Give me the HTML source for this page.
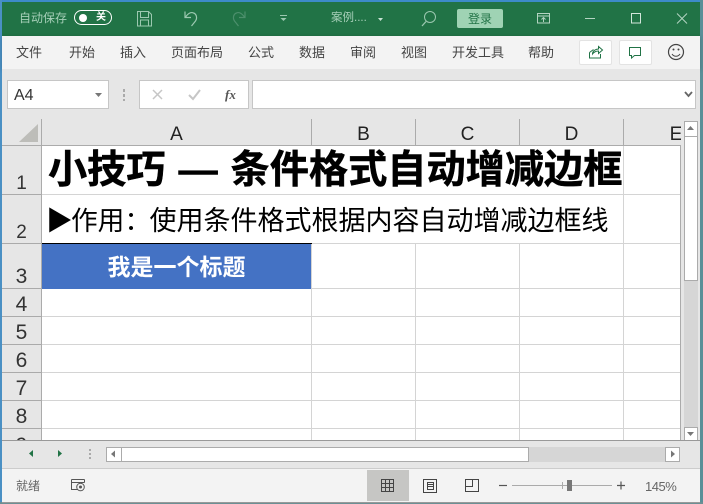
<!DOCTYPE html>
<html><head><meta charset="utf-8">
<style>
html,body{margin:0;padding:0}
body{width:703px;height:504px;position:relative;overflow:hidden;background:#6a9aa0;font-family:"Liberation Sans","Noto Sans CJK SC",sans-serif;color:#444}
div{position:absolute}
.t{white-space:nowrap;line-height:1}
.m{top:46px;font-size:13px;color:#444}
.h{background:#d4d4d4;height:1px;left:42px;width:638px}
.v{background:#d4d4d4;width:1px;top:244px;height:196px}
.r{left:2px;width:39px;text-align:center;font-size:21px;color:#333;font-family:"Liberation Sans",sans-serif;line-height:1;font-weight:normal}
.c{top:125px;font-size:19px;color:#222;text-align:center;line-height:1;font-family:"Liberation Sans",sans-serif}
.rl{left:2px;width:39px;height:1px;background:#aaa}
.cl{top:119px;width:1px;height:26px;background:#ababab}
svg{position:absolute;overflow:visible}
</style></head>
<body>
<div style="left:0;top:0;width:703px;height:2px;background:#3d8bc9"></div>
<div style="left:0;top:0;width:2px;height:504px;background:#4a90c4"></div>
<div style="left:700px;top:0;width:3px;height:504px;background:#5a8f98"></div>
<div style="left:2px;top:2px;width:698px;height:34px;background:#217346"></div>
<div class="t" style="left:19px;top:12px;font-size:12px;color:#a6cfb8">自动保存</div>
<div style="left:74px;top:10px;width:36px;height:13px;border:1.5px solid #fff;border-radius:8px"></div>
<div style="left:79px;top:14px;width:8px;height:8px;background:#fff;border-radius:50%"></div>
<div class="t" style="left:96px;top:13px;font-size:10px;color:#fff;font-weight:bold">关</div>
<svg style="left:0;top:0" width="703" height="36" fill="none" stroke-width="1">
<path d="M137.500 11.500h11l3 3v11.500h-14zM140.500 11.500v6h8v-6M140.500 26v-6h8v6" stroke="#9cc8b0"/>
<path d="M185 11.500v6h6M185.500 17c3-4 6-5 8-4 3 1 4 5 2 8l-4 5" stroke="#9cc8b0" stroke-width="1.200"/>
<path d="M245 11.500v6h-6M244.500 17c-3-4-6-5-8-4-3 1-4 5-2 8l4 5" stroke="#4c8f6c" stroke-width="1.200"/>
<path d="M280 15.500h7" stroke="#9cc8b0"/><path d="M280.500 18l3 3 3-3z" fill="#9cc8b0"/>
<path d="M378 18h5l-2.500 3z" fill="#c9e2d4"/>
<circle cx="430" cy="17" r="5.500" stroke="#9cc8b0" stroke-width="1"/><path d="M426 21.500l-4 4.500" stroke="#9cc8b0" stroke-width="1.300"/>
<path d="M537.500 13.500h12v9.500h-12zM537.500 16h12M543.500 22v-4M541.500 19.500l2-2 2 2" stroke="#b4d4c2"/>
<path d="M585 18.500h10" stroke="#b4d4c2"/>
<path d="M631.500 13.500h9v9.500h-9z" stroke="#d2e6da"/>
<path d="M677 13.500l10 10M687 13.500l-10 10" stroke="#b4d4c2"/>
</svg>
<div class="t" style="left:457px;top:9px;width:46px;height:19px;background:#9fd3b4;border-radius:2px"></div>
<div class="t" style="left:468px;top:13px;font-size:12px;color:#217346">登录</div>
<div class="t" style="left:331px;top:13px;font-size:11.500px;color:#a6cfb8">案例....</div>

<div style="left:2px;top:36px;width:698px;height:33px;background:#f3f3f3;box-shadow:0 1px 4px rgba(0,0,0,.2)"></div>
<div class="t m" style="left:16px">文件</div>
<div class="t m" style="left:69px">开始</div>
<div class="t m" style="left:120px">插入</div>
<div class="t m" style="left:171px">页面布局</div>
<div class="t m" style="left:248px">公式</div>
<div class="t m" style="left:299px">数据</div>
<div class="t m" style="left:350px">审阅</div>
<div class="t m" style="left:401px">视图</div>
<div class="t m" style="left:452px">开发工具</div>
<div class="t m" style="left:528px">帮助</div>
<div style="left:579px;top:40px;width:31px;height:23px;background:#fff;border:1px solid #e3e3e3;border-radius:2px"></div>
<div style="left:619px;top:40px;width:31px;height:23px;background:#fff;border:1px solid #e3e3e3;border-radius:2px"></div>
<svg style="left:0;top:36px" width="703" height="33" fill="none">
<path d="M589.500 16.500v5.500h11v-4M589.500 16.500l4-3M592.500 18c0-3 3-5 6-5v-2.500l4 3.500-4 3.500v-2.500c-3 0-4.500 1-6 3z" stroke="#217346"/>
<path d="M629.500 11.500h11v8h-6l-3 2.500v-2.500h-2z" stroke="#217346"/>
<circle cx="676" cy="16" r="7.500" stroke="#444" stroke-width="1.200"/><circle cx="673.500" cy="13.500" r="1" fill="#444"/><circle cx="678.500" cy="13.500" r="1" fill="#444"/><path d="M672 18c2 3 6 3 8 0" stroke="#444"/>
</svg>

<div style="left:2px;top:69px;width:698px;height:50px;background:#e6e6e6"></div>
<div style="left:7px;top:80px;width:100px;height:27px;background:#fff;border:1px solid #c6c6c6"></div>
<div class="t" style="left:14px;top:88px;font-size:16px;color:#333">A4</div>
<div style="left:139px;top:80px;width:108px;height:27px;background:#fff;border:1px solid #c6c6c6"></div>
<div class="t" style="left:225px;top:88px;font-size:13px;color:#555;font-family:'Liberation Serif',serif;font-style:italic;font-weight:bold">fx</div>
<div style="left:252px;top:80px;width:442px;height:27px;background:#fff;border:1px solid #c6c6c6"></div>
<svg style="left:0;top:69px" width="703" height="40" fill="none">
<path d="M95 24h7l-3.500 4z" fill="#777"/>
<path d="M124 20v3M124 25v3M124 30v2" stroke="#aaa" stroke-width="2"/>
<path d="M153 21l9 9M162 21l-9 9" stroke="#c6c6c6" stroke-width="1.500"/>
<path d="M189 26l4 4 7-9" stroke="#c6c6c6" stroke-width="2"/>
<path d="M685 23l3.500 4 3.500-4" stroke="#666" stroke-width="1.800"/>
</svg>

<div style="left:2px;top:119px;width:698px;height:322px;background:#e6e6e6"></div>
<svg style="left:0;top:119px" width="42" height="27"><path d="M19 23L38 5v18z" fill="#bdbdb9"/></svg>
<div style="left:42px;top:146px;width:638px;height:294px;background:#fff"></div>
<div class="h" style="top:194px"></div><div class="h" style="top:243px"></div><div class="h" style="top:288px"></div>
<div class="h" style="top:316px"></div><div class="h" style="top:344px"></div><div class="h" style="top:372px"></div>
<div class="h" style="top:400px"></div><div class="h" style="top:428px"></div>
<div class="v" style="left:311px"></div><div class="v" style="left:415px"></div><div class="v" style="left:519px"></div><div class="v" style="left:623px;top:146px;height:294px"></div>
<div style="left:2px;top:145px;width:678px;height:1px;background:#ababab"></div>
<div style="left:41px;top:119px;width:1px;height:321px;background:#ababab"></div>
<div style="left:680px;top:145px;width:1px;height:295px;background:#ababab"></div>
<div class="cl" style="left:311px"></div><div class="cl" style="left:415px"></div><div class="cl" style="left:519px"></div><div class="cl" style="left:623px"></div>
<div class="rl" style="top:194px"></div><div class="rl" style="top:243px"></div><div class="rl" style="top:288px"></div><div class="rl" style="top:316px"></div><div class="rl" style="top:344px"></div><div class="rl" style="top:372px"></div><div class="rl" style="top:400px"></div><div class="rl" style="top:428px"></div>

<div class="c" style="left:42px;width:269px">A</div>
<div class="c" style="left:312px;width:103px">B</div>
<div class="c" style="left:416px;width:103px">C</div>
<div class="c" style="left:520px;width:103px">D</div>
<div class="c" style="left:669px;width:14px">E</div>

<div class="r" style="top:174px;font-size:19px">1</div>
<div class="r" style="top:223px;font-size:19px">2</div>
<div class="r" style="top:266px">3</div>
<div class="r" style="top:294px">4</div>
<div class="r" style="top:322px">5</div>
<div class="r" style="top:350px">6</div>
<div class="r" style="top:378px">7</div>
<div class="r" style="top:406px">8</div>
<div style="left:2px;top:429px;width:39px;height:11px;overflow:hidden"><div class="r" style="left:0;top:6px">9</div></div>

<div class="t" style="left:48px;top:151px;font-size:39.200px;word-spacing:2px;font-weight:bold;color:#000;-webkit-text-stroke:.5px #000">小技巧 — 条件格式自动增减边框</div>
<div class="t" style="left:46px;top:208px;font-size:26.700px;color:#000">▶</div>
<div class="t" style="left:71px;top:208px;font-size:26.700px;color:#000">作用：</div>
<div class="t" style="left:149.500px;top:207.500px;font-size:27px;color:#000">使用条件格式根据内容自动增减边框线</div>
<div style="left:42px;top:243px;width:270px;height:1px;background:#000"></div>
<div style="left:42px;top:244px;width:269px;height:45px;background:#4472c4"></div>
<div class="t" style="left:42px;width:269px;top:256px;text-align:center;font-size:23px;font-weight:bold;color:#fff">我是一个标题</div>

<div style="left:681px;top:119px;width:19px;height:322px;background:#e6e6e6"></div>
<div style="left:684px;top:121px;width:12px;height:14px;background:#fff;border:1px solid #ababab"></div>
<div style="left:684px;top:136px;width:12px;height:143px;background:#fff;border:1px solid #ababab"></div>
<div style="left:684px;top:281px;width:14px;height:146px;background:#d6d6d6"></div>
<div style="left:684px;top:427px;width:12px;height:12px;background:#fff;border:1px solid #ababab"></div>
<svg style="left:683px;top:121px" width="15" height="320"><path d="M4 9h7l-3.500-4z" fill="#777"/><path d="M4 311h7l-3.500 4z" fill="#777"/></svg>

<div style="left:2px;top:440px;width:698px;height:1px;background:#999"></div>
<div style="left:2px;top:441px;width:698px;height:28px;background:#e6e6e6"></div>
<div style="left:2px;top:468px;width:698px;height:1px;background:#ccc"></div>
<div style="left:106px;top:447px;width:574px;height:15px;background:#d6d6d6"></div>
<div style="left:106px;top:447px;width:14px;height:13px;background:#fff;border:1px solid #ababab"></div>
<div style="left:121px;top:447px;width:406px;height:13px;background:#fff;border:1px solid #ababab"></div>
<div style="left:665px;top:447px;width:13px;height:13px;background:#fff;border:1px solid #ababab"></div>
<svg style="left:0;top:441px" width="703" height="28">
<path d="M33 9v7l-4-3.500z" fill="#217346"/><path d="M58 9v7l4-3.500z" fill="#217346"/>
<path d="M90 8v2M90 12v2M90 16v2" stroke="#aaa" stroke-width="2"/>
<path d="M115 9.500v7l-4-3.500z" fill="#777"/><path d="M671 9.500v7l4-3.500z" fill="#777"/>
</svg>

<div style="left:2px;top:469px;width:698px;height:33px;background:#f3f3f3"></div>
<div style="left:0;top:502px;width:703px;height:2px;background:#6b8f94"></div>
<div style="left:2px;top:502px;width:698px;height:1px;background:#999"></div>
<div class="t" style="left:16px;top:480px;font-size:12px;color:#666">就绪</div>
<div style="left:367px;top:470px;width:42px;height:31px;background:#c6c6c4"></div>
<svg style="left:0;top:469px" width="703" height="33" fill="none" stroke="#444">
<path d="M71.500 10.500h13M71.500 13.500h13M71.500 10.500v10h6M84.500 10.500v3" stroke="#555"/><circle cx="80.500" cy="18" r="3.800" stroke="#555"/><circle cx="80.500" cy="18" r="1.500" fill="#555" stroke="none"/>
<path d="M381.500 10.500h12v12h-12zM385.500 10.500v12M389.500 10.500v12M381.500 14.500h12M381.500 18.500h12"/>
<path d="M423.500 10.500h13v13h-13zM427.500 13.500h6v7h-6zM428 15.500h5M428 17.500h5"/>
<path d="M465.500 10.500h13v12h-13zM465.500 17.500h7v-7"/>
<path d="M499 16.500h8" stroke="#555" stroke-width="1.200"/>
<path d="M512 16.500h100" stroke="#aaa"/><path d="M562.500 13v7" stroke="#aaa"/>
<path d="M617 16.500h8M621 12.500v8" stroke="#555" stroke-width="1.200"/>
<rect x="567" y="11" width="5" height="11" fill="#777" stroke="none"/>
</svg>
<div class="t" style="left:645px;top:480px;font-size:13px;letter-spacing:-.5px;color:#666;font-family:'Liberation Sans',sans-serif">145%</div>
</body></html>
